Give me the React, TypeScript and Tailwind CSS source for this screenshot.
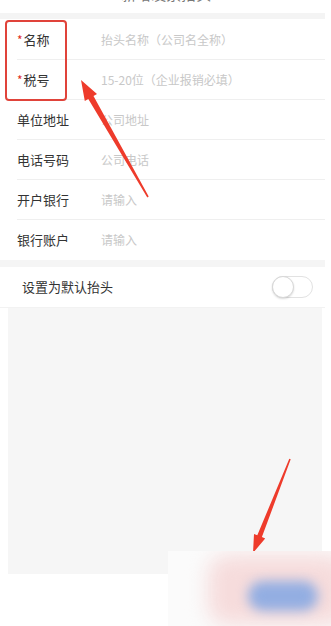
import React from "react";

const FIELDS = [
  { label: "名称", placeholder: "抬头名称（公司名全称）", required: true },
  { label: "税号", placeholder: "15-20位（企业报销必填）", required: true },
  { label: "单位地址", placeholder: "公司地址" },
  { label: "电话号码", placeholder: "公司电话" },
  { label: "开户银行", placeholder: "请输入" },
  { label: "银行账户", placeholder: "请输入" },
];

function Row({ label, placeholder, required, last }: { label: string; placeholder: string; required?: boolean; last?: boolean }) {
  return (
    <div className="ml-[17px] flex h-[40px] items-center">
      <div
        className={`flex h-full flex-1 items-center ${last ? "" : "border-b border-[#efefef]"}`}
      >
        <div className="w-[84px] text-[13px] text-[#333]">
          {required && <span className="text-[#e02e24] text-[12px] mr-[1px]">*</span>}
          {label}
        </div>
        <div className="text-[12px] text-[#c8c8c8]">{placeholder}</div>
      </div>
    </div>
  );
}

export default function App() {
  return (
    <div
      className="relative h-[626px] w-[331px] overflow-hidden bg-white"
      style={{ fontFamily: '"Noto Sans CJK SC", "Noto Sans", sans-serif' }}
    >
      <div className="w-[325px]">
        {/* Header (cut off at top) */}
        <div className="h-[13px] overflow-hidden">
          <div className="-mt-[15px] flex h-[18px] items-center">
            <span className="ml-[21px] text-[15px] text-[#666]">&lt;</span>
            <span className="ml-[92px] text-[15px] text-[#777]">新增发票抬头</span>
          </div>
        </div>
        <div className="h-[6px] bg-[#f4f4f4]" />

        {/* Fields */}
        <div className="bg-white pt-[1px]">
          {FIELDS.map((f, i) => (
            <Row key={f.label} {...f} last={i === FIELDS.length - 1} />
          ))}
        </div>

        <div className="h-[7px] bg-[#f5f5f5]" />

        {/* Default toggle */}
        <div className="flex h-[41px] items-center justify-between pl-[22px] pr-[12px] border-b border-[#f2f2f2]">
          <span className="text-[13px] text-[#333]">设置为默认抬头</span>
          <div className="relative h-[22px] w-[41px] rounded-full border border-[#e2e2e2] bg-white">
            <div className="absolute left-[-1px] top-[-1px] h-[22px] w-[22px] rounded-full border border-[#d8d8d8] bg-white shadow-[0_1px_2px_rgba(0,0,0,0.15)]" />
          </div>
        </div>
      </div>

      {/* Gray empty area */}
      <div className="ml-[8px] h-[266px] w-[314px] bg-[#f6f6f6]" />

      {/* Red annotation box */}
      <div className="absolute left-[5px] top-[20px] h-[81px] w-[62px] rounded-[4px] border-[2.5px] border-[#e0433a]" />

      {/* Red arrows */}
      <svg className="absolute left-0 top-0" width="331" height="626" viewBox="0 0 331 626">
        <polygon
          fill="#ee3b2b"
          points="81,80 97,93.9 93.5,95.9 148.7,196.6 147.3,197.4 88.3,98.9 84.8,100.9"
        />
        <polygon
          fill="#ee3b2b"
          points="253,553 265.2,538.4 261.9,537.1 290.7,459.3 289.3,458.7 257.3,535.3 254,534"
        />
      </svg>

      {/* Blurred bottom-right region */}
      <div className="absolute left-[168px] top-[551px] h-[75px] w-[163px] overflow-hidden bg-[#fbfbfb]">
        <div className="absolute left-[40px] top-[4px] h-[70px] w-[140px] rounded-[20px] bg-[#f6dcdc] blur-[10px]" />
        <div className="absolute left-[80px] top-[30px] h-[30px] w-[70px] rounded-full bg-[#93aee2] blur-[6px]" />
      </div>
    </div>
  );
}
